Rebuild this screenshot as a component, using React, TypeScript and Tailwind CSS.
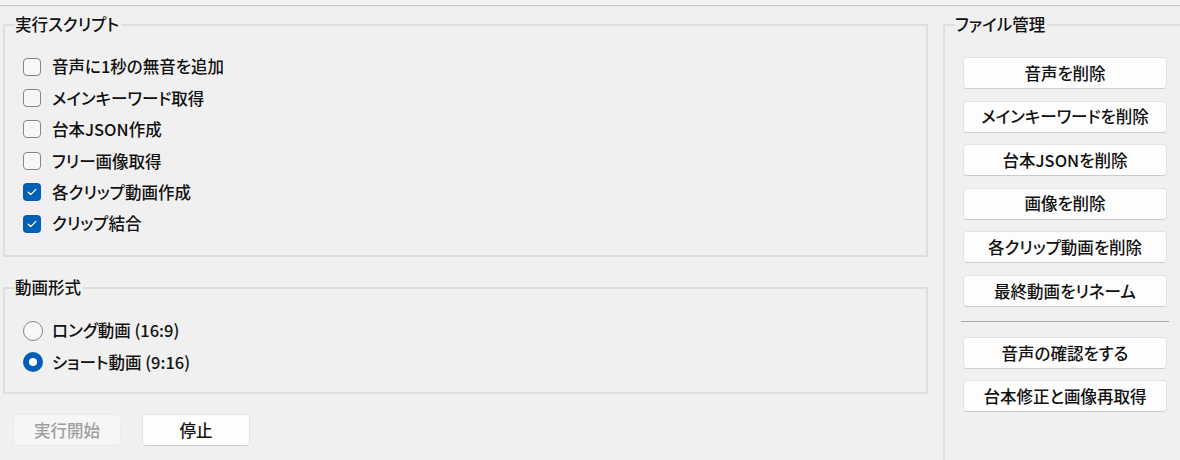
import React, { useState } from 'react';

const font = { fontFamily: '"Noto Sans CJK JP", "Noto Sans", sans-serif' };

const scripts = [
  '音声に1秒の無音を追加',
  'メインキーワード取得',
  '台本JSON作成',
  'フリー画像取得',
  '各クリップ動画作成',
  'クリップ結合',
];

const fileButtons = [
  '音声を削除',
  'メインキーワードを削除',
  '台本JSONを削除',
  '画像を削除',
  '各クリップ動画を削除',
  '最終動画をリネーム',
];

const GroupBox: React.FC<{ title: string; className?: string; children: React.ReactNode }> = ({
  title,
  className,
  children,
}) => (
  <div className={`relative border-2 border-[#dedede] ${className ?? ''}`}>
    <span className="absolute left-[10px] top-[-11px] bg-[#f0f0f0] pr-[2px] text-[16.5px] leading-[18px] text-[#111]">
      {title}
    </span>
    {children}
  </div>
);

const CheckBox: React.FC<{ checked: boolean; label: string; onToggle: () => void }> = ({
  checked,
  label,
  onToggle,
}) => (
  <button onClick={onToggle} className="flex h-[31.4px] items-center gap-[11px] text-left">
    {checked ? (
      <span className="flex h-[18px] w-[18px] items-center justify-center rounded-[4px] bg-[#005fb8]">
        <svg width="10" height="8" viewBox="0 0 10 8" fill="none">
          <path d="M1.2 4.2 L3.8 6.6 L8.8 1.4" stroke="white" strokeWidth="1.3" strokeLinecap="round" strokeLinejoin="round" />
        </svg>
      </span>
    ) : (
      <span className="h-[18px] w-[18px] rounded-[4px] border-[1.5px] border-[#858585] bg-[#f7f7f7]" />
    )}
    <span className="text-[16.5px] leading-none text-[#111]">{label}</span>
  </button>
);

const Radio: React.FC<{ checked: boolean; label: string; onSelect: () => void }> = ({
  checked,
  label,
  onSelect,
}) => (
  <button onClick={onSelect} className="flex h-[31.4px] items-center gap-[9px] text-left">
    {checked ? (
      <span className="flex h-[20px] w-[20px] items-center justify-center rounded-full bg-[#005fb8]">
        <span className="h-[8px] w-[8px] rounded-full bg-white" />
      </span>
    ) : (
      <span className="h-[20px] w-[20px] rounded-full border-[1.5px] border-[#858585] bg-[#f7f7f7]" />
    )}
    <span className="text-[16.5px] leading-none text-[#111]">{label}</span>
  </button>
);

const FileButton: React.FC<{ label: string }> = ({ label }) => (
  <button className="h-[32px] w-[204px] rounded-[4px] border border-[#e3e3e3] border-b-[#cccccc] bg-[#fdfdfd] text-[16.5px] text-[#111] hover:bg-[#f8f8f8]">
    {label}
  </button>
);

export default function App() {
  const [checked, setChecked] = useState([false, false, false, false, true, true]);
  const [format, setFormat] = useState<'long' | 'short'>('short');

  const toggle = (i: number) => setChecked((c) => c.map((v, j) => (j === i ? !v : v)));

  return (
    <div
      className="h-[460px] w-[1180px] overflow-hidden bg-[#f0f0f0] font-medium [font-feature-settings:'palt']"
      style={font}
    >
      <div className="h-[6px] border-b border-[#c6c6c6] bg-[#f3f3f3]" />
      <div className="flex pt-[18px]">
        {/* left column */}
        <div className="ml-[3px] w-[925px]">
          <GroupBox title="実行スクリプト" className="h-[233px] pl-[18px] pt-[25px]">
            <div className="flex flex-col items-start">
              {scripts.map((s, i) => (
                <CheckBox key={s} label={s} checked={checked[i]} onToggle={() => toggle(i)} />
              ))}
            </div>
          </GroupBox>

          <GroupBox title="動画形式" className="mt-[30px] h-[107px] pl-[18px] pt-[26px]">
            <div className="flex flex-col items-start">
              <Radio label="ロング動画 (16:9)" checked={format === 'long'} onSelect={() => setFormat('long')} />
              <Radio label="ショート動画 (9:16)" checked={format === 'short'} onSelect={() => setFormat('short')} />
            </div>
          </GroupBox>

          <div className="ml-[10px] mt-[20px] flex gap-[21px]">
            <button
              disabled
              className="h-[32px] w-[108px] rounded-[4px] border border-[#ececec] bg-[#f6f6f6] text-[16.5px] text-[#a0a0a0]"
            >
              実行開始
            </button>
            <button className="h-[32px] w-[108px] rounded-[4px] border border-[#e3e3e3] border-b-[#cccccc] bg-[#fdfdfd] text-[16.5px] text-[#111]">
              停止
            </button>
          </div>
        </div>

        {/* right column */}
        <div className="ml-[15px] flex-1">
          <GroupBox title="ファイル管理" className="mr-[-20px] h-[460px] pl-[18px] pt-[31px]">
            <div className="flex w-[204px] flex-col gap-[11.6px]">
              {fileButtons.map((b) => (
                <FileButton key={b} label={b} />
              ))}
            </div>
            <div className="mb-[15px] ml-[-2px] mt-[14px] h-[1.5px] w-[208px] bg-[#a8a8a8]" />
            <div className="flex w-[204px] flex-col gap-[11px]">
              <FileButton label="音声の確認をする" />
              <FileButton label="台本修正と画像再取得" />
            </div>
          </GroupBox>
        </div>
      </div>
    </div>
  );
}
